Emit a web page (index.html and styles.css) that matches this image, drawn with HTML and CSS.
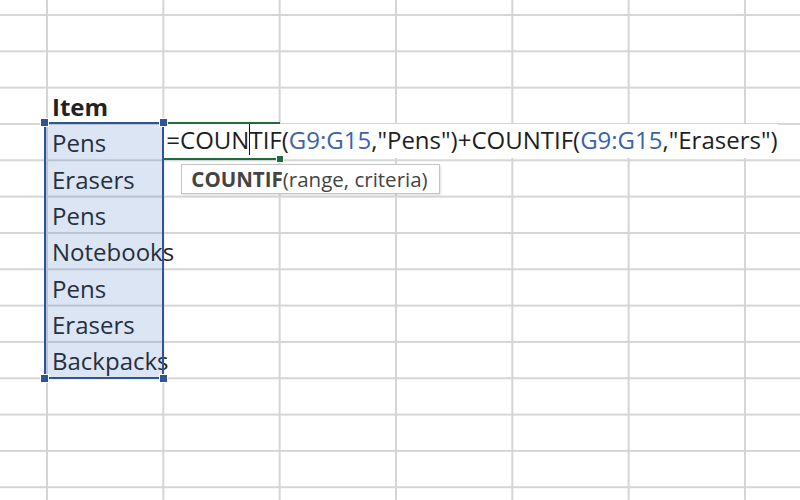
FILE: index.html
```html
<!DOCTYPE html>
<html>
<head>
<meta charset="utf-8">
<link rel="stylesheet" href="styles.css">
</head>
<body>
<div class="sheet">
  <div class="cell bold r4">Item</div>
  <div class="selection">
    <span class="handle tl"></span>
    <span class="handle tr"></span>
    <span class="handle bl"></span>
    <span class="handle br"></span>
  </div>
  <div class="cell r5">Pens</div>
  <div class="cell r6">Erasers</div>
  <div class="cell r7">Pens</div>
  <div class="cell r8">Notebooks</div>
  <div class="cell r9">Pens</div>
  <div class="cell r10">Erasers</div>
  <div class="cell r11">Backpacks</div>
  <div class="active">
    <div class="formula">=COUN<span class="caret"></span>TIF(<span class="ref">G9:G15</span>,"Pens")+COUNTIF(<span class="ref">G9:G15</span>,"Erasers")</div>
    <span class="fill-handle"></span>
    <div class="tooltip"><b>COUNTIF</b>(range, criteria)</div>
  </div>
</div>
</body>
</html>
```
FILE: styles.css
```css
html, body {
  margin: 0;
  padding: 0;
  background: #ffffff;
}

.sheet {
  width: 800px;
  height: 500px;
  overflow: hidden;
  display: grid;
  grid-template-columns: 47px repeat(6, 116.33px) 1fr;
  grid-template-rows: 15px repeat(13, 36.33px) 1fr;
  background-color: #ffffff;
  background-image:
    linear-gradient(to right, #d5d5d5 2px, transparent 2px),
    linear-gradient(to bottom, #d5d5d5 2px, transparent 2px);
  background-size: 116.33px 100%, 100% 36.33px;
  background-position: 46px 0, 0 14px;
  font-family: "Open Sans", "Liberation Sans", sans-serif;
  color: #222222;
}

.cell {
  grid-column: 2;
  display: flex;
  align-items: flex-end;
  padding: 0 0 5px 5px;
  font-size: 24px;
  line-height: 1;
  white-space: nowrap;
  z-index: 1;
}

.bold { font-weight: 700; }

.r4 { grid-row: 4; }
.r5 { grid-row: 5; }
.r6 { grid-row: 6; }
.r7 { grid-row: 7; }
.r8 { grid-row: 8; }
.r9 { grid-row: 9; }
.r10 { grid-row: 10; }
.r11 { grid-row: 11; }

.selection {
  grid-column: 2;
  grid-row: 5 / 12;
  margin: -2px -1px -1px -3px;
  border: 2px solid #2e5597;
  background: rgba(60, 110, 190, 0.18);
  position: relative;
  z-index: 2;
}

.handle {
  position: absolute;
  width: 7px;
  height: 7px;
  background: #2e5597;
  border: 1px solid #ffffff;
}
.handle.tl { left: -6px; top: -6px; }
.handle.tr { right: -6px; top: -6px; }
.handle.bl { left: -6px; bottom: -6px; }
.handle.br { right: -6px; bottom: -6px; }

.active {
  grid-column: 3;
  grid-row: 5;
  margin: -2px 0 0 -1px;
  border-top: 2px solid #1f6b3e;
  border-left: 2px solid #1f6b3e;
  border-bottom: 2px solid #1f6b3e;
  background: #ffffff;
  position: relative;
  z-index: 1;
  display: flex;
  align-items: flex-end;
}

.formula {
  font-size: 24px;
  line-height: 1;
  white-space: nowrap;
  padding: 0 0 3px 2px;
  background: #ffffff;
  color: #1e1e1e;
}

.ref { color: #3b64a8; }

.caret {
  display: inline-block;
  width: 0;
  height: 31px;
  border-left: 1px solid #111111;
  vertical-align: -6px;
  margin: 0 -1px 0 0;
}

.fill-handle {
  position: absolute;
  right: -4px;
  bottom: -5px;
  width: 6px;
  height: 6px;
  background: #1f6b3e;
  border: 1px solid #ffffff;
}

.tooltip {
  position: absolute;
  left: 17px;
  top: 40px;
  width: 259px;
  height: 30px;
  box-sizing: border-box;
  border: 1px solid #c4c4c4;
  background: #ffffff;
  box-shadow: 1px 1px 2px rgba(0, 0, 0, 0.12);
  padding: 3px 0 0 9px;
  font-size: 20.5px;
  line-height: 1.1;
  color: #444444;
  white-space: nowrap;
}

.tooltip b {
  font-weight: 700;
}
```
